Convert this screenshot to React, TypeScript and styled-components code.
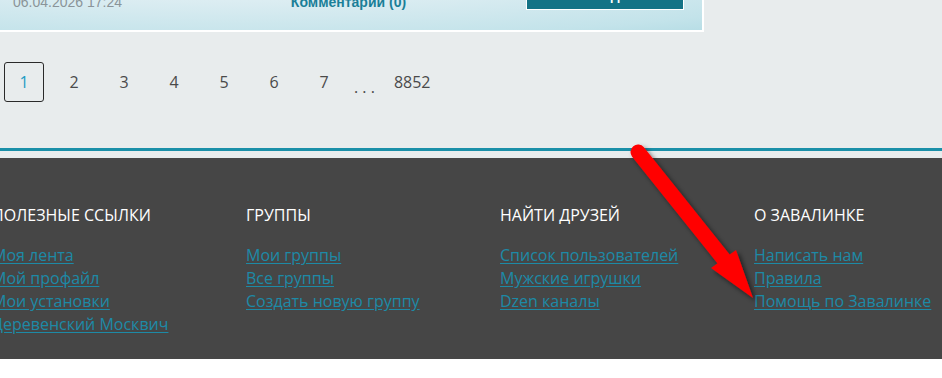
import React from "react";
import styled, { createGlobalStyle } from "styled-components";

const GlobalStyle = createGlobalStyle`
  html, body {
    margin: 0;
    padding: 0;
    background: #ffffff;
  }
  body {
    font-family: "Open Sans", "Noto Sans", "DejaVu Sans", sans-serif;
  }
`;

const Page = styled.div`
  position: relative;
  width: 942px;
  overflow: hidden;
`;

const Main = styled.section`
  background: #e8eced;
  display: flex;
  flex-direction: column;
  padding-bottom: 7px;
`;

const Card = styled.article`
  width: 704px;
  height: 82px;
  margin-top: -50px;
  padding: 0 18px 20px 13px;
  box-sizing: border-box;
  display: flex;
  align-items: flex-end;
  border-right: 2px solid #ffffff;
  border-bottom: 2px solid #ffffff;
  background:
    radial-gradient(ellipse 120% 140% at 35% 0%, #e9f4f7 0%, #dcedf2 45%, #c3e3ea 80%, #acd8e1 100%);
`;

const CardRow = styled.div`
  flex: 1;
  display: grid;
  grid-template-columns: 1fr auto 1fr;
  align-items: end;
`;

const DateText = styled.span`
  font-family: "Liberation Sans", Arial, sans-serif;
  font-size: 14px;
  line-height: 16px;
  color: #8a9499;
`;

const Comments = styled.a`
  font-family: "Liberation Sans", Arial, sans-serif;
  font-size: 14px;
  line-height: 16px;
  font-weight: bold;
  color: #1b7f98;
  text-decoration: none;
`;

const ReadMore = styled.a`
  justify-self: end;
  width: 158px;
  height: 30px;
  box-sizing: border-box;
  border: 1px solid #ffffff;
  background: #137386;
  color: #ffffff;
  font-family: "Liberation Sans", Arial, sans-serif;
  font-weight: bold;
  font-size: 14px;
  line-height: 16px;
  display: flex;
  align-items: flex-end;
  justify-content: center;
  padding-bottom: 6px;
  text-decoration: none;
`;

const Pagination = styled.nav`
  display: flex;
  align-items: center;
  gap: 10px;
  padding-left: 4px;
  margin-top: 30px;
  height: 40px;
`;

const PageItem = styled.a<{ $active?: boolean }>`
  min-width: 40px;
  height: 40px;
  box-sizing: border-box;
  padding: 0 8px;
  display: flex;
  align-items: center;
  justify-content: center;
  font-size: 16px;
  color: ${(p) => (p.$active ? "#1a9cc4" : "#4a4a4a")};
  border: 1px solid ${(p) => (p.$active ? "#2a2a2a" : "transparent")};
  border-radius: 3px;
  text-decoration: none;
`;

const Dots = styled.span`
  font-size: 16px;
  color: #4a4a4a;
  align-self: center;
  padding-top: 10px;
  white-space: pre;
`;

const TealRule = styled.div`
  height: 3px;
  background: #1a8fa8;
  margin-top: 46px;
`;

const Footer = styled.footer`
  background: #464646;
  height: 201px;
  box-sizing: border-box;
  padding-top: 46px;
`;

const Columns = styled.div`
  display: grid;
  grid-template-columns: repeat(4, 254px);
  margin-left: -8px;
`;

const Column = styled.div`
  display: flex;
  flex-direction: column;
`;

const Heading = styled.h3`
  margin: 0 0 18px 0;
  font-size: 16px;
  line-height: 22px;
  font-weight: 400;
  color: #ffffff;
  text-transform: uppercase;
`;

const LinkList = styled.ul`
  list-style: none;
  margin: 0;
  padding: 0;
`;

const FooterLink = styled.a`
  display: inline-block;
  font-size: 16px;
  line-height: 23px;
  color: #1d8aa6;
  text-decoration: underline;
  text-underline-offset: 2px;
`;

const ArrowOverlay = styled.svg`
  position: absolute;
  left: 0;
  top: 0;
  pointer-events: none;
`;

const columns = [
  {
    title: "Полезные ссылки",
    links: ["Моя лента", "Мой профайл", "Мои установки", "Деревенский Москвич"],
  },
  {
    title: "Группы",
    links: ["Мои группы", "Все группы", "Создать новую группу"],
  },
  {
    title: "Найти друзей",
    links: ["Список пользователей", "Мужские игрушки", "Dzen каналы"],
  },
  {
    title: "О Завалинке",
    links: ["Написать нам", "Правила", "Помощь по Завалинке"],
  },
];

export default function App() {
  return (
    <>
      <GlobalStyle />
      <Page>
        <Main>
          <Card>
            <CardRow>
              <DateText>06.04.2026 17:24</DateText>
              <Comments href="#">Комментарии (0)</Comments>
              <ReadMore href="#">Читать далее</ReadMore>
            </CardRow>
          </Card>
          <Pagination>
            {["1", "2", "3", "4", "5", "6", "7"].map((n) => (
              <PageItem key={n} href="#" $active={n === "1"}>
                {n}
              </PageItem>
            ))}
            <Dots>. . .</Dots>
            <PageItem href="#">8852</PageItem>
          </Pagination>
          <TealRule />
        </Main>
        <Footer>
          <Columns>
            {columns.map((c) => (
              <Column key={c.title}>
                <Heading>{c.title}</Heading>
                <LinkList>
                  {c.links.map((l) => (
                    <li key={l}>
                      <FooterLink href="#">{l}</FooterLink>
                    </li>
                  ))}
                </LinkList>
              </Column>
            ))}
          </Columns>
        </Footer>
        <ArrowOverlay width="942" height="378" viewBox="0 0 942 378">
          <defs>
            <filter id="shadow" x="-20%" y="-20%" width="140%" height="140%">
              <feDropShadow dx="3" dy="3" stdDeviation="2.5" floodColor="#000" floodOpacity="0.55" />
            </filter>
          </defs>
          <g filter="url(#shadow)">
            <line x1="638" y1="152" x2="726" y2="262" stroke="#ff0000" strokeWidth="15" strokeLinecap="round" />
            <polygon points="711,268 736,250 753,298" fill="#ff0000" />
          </g>
        </ArrowOverlay>
      </Page>
    </>
  );
}
